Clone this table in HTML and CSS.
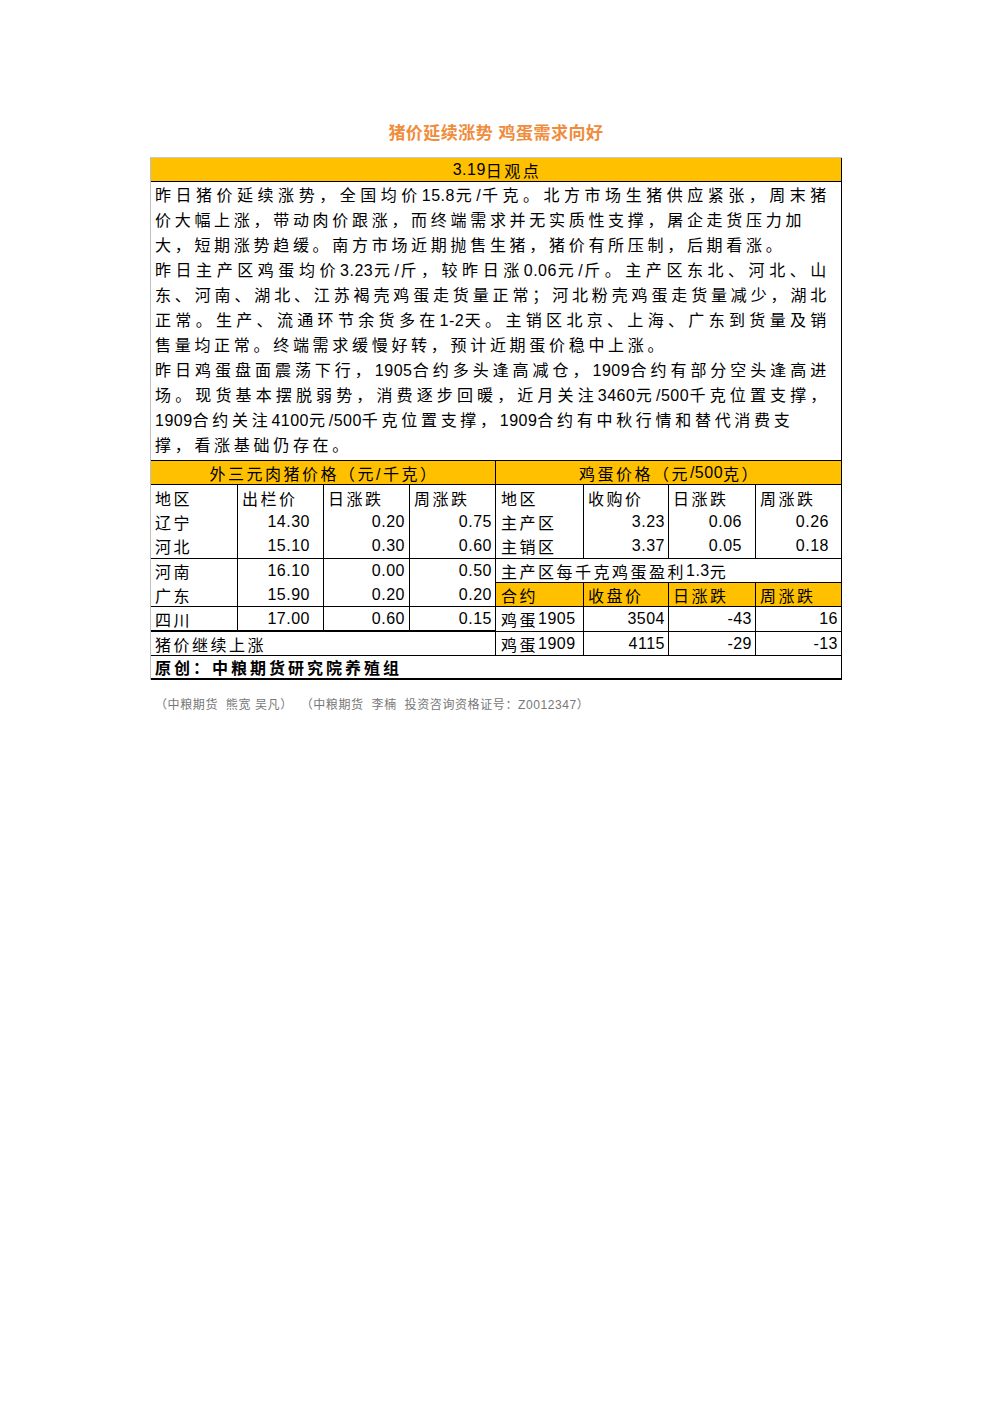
FILE: index.html
```html
<!DOCTYPE html>
<html lang="zh-CN">
<head>
<meta charset="utf-8">
<title>猪价延续涨势 鸡蛋需求向好</title>
<link rel="stylesheet" href="styles.css">
</head>
<body>
<main class="page">
  <h1 class="title">猪价延续涨势 鸡蛋需求向好</h1>
  <div class="sheet">
    <div class="c s8 bb hd"><span class="n">3.19</span>日观点</div>
    <div class="c s8 bb text">
      <div class="ln j">昨日猪价延续涨势，全国均价<span class="n">15.8</span>元<span class="n">/</span>千克。北方市场生猪供应紧张，周末猪</div>
      <div class="ln">价大幅上涨，带动肉价跟涨，而终端需求并无实质性支撑，屠企走货压力加</div>
      <div class="ln">大，短期涨势趋缓。南方市场近期抛售生猪，猪价有所压制，后期看涨。</div>
      <div class="ln j">昨日主产区鸡蛋均价<span class="n">3.23</span>元<span class="n">/</span>斤，较昨日涨<span class="n">0.06</span>元<span class="n">/</span>斤。主产区东北、河北、山</div>
      <div class="ln j">东、河南、湖北、江苏褐壳鸡蛋走货量正常；河北粉壳鸡蛋走货量减少，湖北</div>
      <div class="ln j">正常。生产、流通环节余货多在<span class="n">1-2</span>天。主销区北京、上海、广东到货量及销</div>
      <div class="ln">售量均正常。终端需求缓慢好转，预计近期蛋价稳中上涨。</div>
      <div class="ln j">昨日鸡蛋盘面震荡下行，<span class="n">1905</span>合约多头逢高减仓，<span class="n">1909</span>合约有部分空头逢高进</div>
      <div class="ln j">场。现货基本摆脱弱势，消费逐步回暖，近月关注<span class="n">3460</span>元<span class="n">/500</span>千克位置支撑，</div>
      <div class="ln"><span class="n">1909</span>合约关注<span class="n">4100</span>元<span class="n">/500</span>千克位置支撑，<span class="n">1909</span>合约有中秋行情和替代消费支</div>
      <div class="ln">撑，看涨基础仍存在。</div>
    </div>

    <div class="c s4 bb hd">外三元肉猪价格（元/千克）</div>
    <div class="c s4 bb hd">鸡蛋价格（元<span class="n">/500</span>克）</div>

    <div class="c">地区</div>
    <div class="c">出栏价</div>
    <div class="c">日涨跌</div>
    <div class="c">周涨跌</div>
    <div class="c r">地区</div>
    <div class="c">收购价</div>
    <div class="c">日涨跌</div>
    <div class="c">周涨跌</div>

    <div class="c">辽宁</div>
    <div class="c num pad">14.30</div>
    <div class="c num p4">0.20</div>
    <div class="c num">0.75</div>
    <div class="c r">主产区</div>
    <div class="c num">3.23</div>
    <div class="c num pad">0.06</div>
    <div class="c num pad12">0.26</div>

    <div class="c bb">河北</div>
    <div class="c bb num pad">15.10</div>
    <div class="c bb num p4">0.30</div>
    <div class="c bb num">0.60</div>
    <div class="c bb r">主销区</div>
    <div class="c bb num">3.37</div>
    <div class="c bb num pad">0.05</div>
    <div class="c bb num pad12">0.18</div>

    <div class="c">河南</div>
    <div class="c num pad">16.10</div>
    <div class="c num p4">0.00</div>
    <div class="c num">0.50</div>
    <div class="c s4 bb r">主产区每千克鸡蛋盈利<span class="n">1.3</span>元</div>

    <div class="c bb">广东</div>
    <div class="c bb num pad">15.90</div>
    <div class="c bb num p4">0.20</div>
    <div class="c bb num">0.20</div>
    <div class="c bb hl r">合约</div>
    <div class="c bb hl">收盘价</div>
    <div class="c bb hl">日涨跌</div>
    <div class="c bb hl">周涨跌</div>

    <div class="c bbt">四川</div>
    <div class="c bbt num pad">17.00</div>
    <div class="c bbt num p4">0.60</div>
    <div class="c bbt num">0.15</div>
    <div class="c bb r">鸡蛋<span class="n">1905</span></div>
    <div class="c bb num">3504</div>
    <div class="c bb num">-43</div>
    <div class="c bb num">16</div>

    <div class="c s4 bb">猪价继续上涨</div>
    <div class="c bb r">鸡蛋<span class="n">1909</span></div>
    <div class="c bb num">4115</div>
    <div class="c bb num">-29</div>
    <div class="c bb num">-13</div>

    <div class="c s8 bbt strong">原创：中粮期货研究院养殖组</div>
  </div>
  <p class="source">（中粮期货  熊宽 吴凡）  （中粮期货  李楠  投资咨询资格证号：Z0012347）</p>
</main>
</body>
</html>
```

FILE: styles.css
```css
* {
  box-sizing: border-box;
}

html, body {
  margin: 0;
  padding: 0;
  background: #ffffff;
}

body {
  font-family: "Liberation Sans", "Noto Sans CJK SC", sans-serif;
  color: #000000;
}

.page {
  padding-top: 122px;
  width: 992px;
}

.title {
  margin: 0 0 11px;
  text-align: center;
  font-size: 17px;
  line-height: 24px;
  height: 24px;
  font-weight: bold;
  color: #f08c3c;
  letter-spacing: 0.5px;
}

.sheet {
  display: grid;
  grid-template-columns: 87px 86px 86px 86px 88px 85px 87px 86px;
  grid-template-rows: 24px 279px 24px 25px 24px 25px 24px 24px 25px 24px 24px;
  margin-left: 150px;
  width: 692px;
  border-left: 1px solid #bfbfbf;
  border-top: 1px solid #c8c8c8;
}

.c {
  display: flex;
  align-items: center;
  min-width: 0;
  overflow: hidden;
  white-space: nowrap;
  padding: 0 2px 0 4px;
  border-right: 1px solid #000000;
  font-size: 16px;
  letter-spacing: 2.5px;
}

.c.r {
  padding-left: 5px;
}

.s8 {
  grid-column: span 8;
}

.s4 {
  grid-column: span 4;
}

.bb {
  border-bottom: 1px solid #000000;
}

.bbt {
  border-bottom: 2px solid #000000;
}

.hd {
  background: #ffc000;
  justify-content: center;
}

.hl {
  background: #ffc000;
}

.num {
  justify-content: flex-end;
  padding-right: 3px;
  letter-spacing: 0.5px;
}

.num.p4 {
  padding-right: 4px;
}

.num.pad {
  padding-right: 13px;
}

.num.pad12 {
  padding-right: 12px;
}

.strong {
  font-weight: bold;
  letter-spacing: 3px;
}

.text {
  display: block;
  padding: 1px 11px 0 4px;
  letter-spacing: 3.7px;
}

.ln {
  height: 25px;
  line-height: 25px;
  white-space: nowrap;
}

.ln.j {
  text-align: justify;
  text-align-last: justify;
}

.n {
  letter-spacing: 0.5px;
}

.source {
  margin: 17px 0 0 155px;
  font-size: 12px;
  line-height: 16px;
  color: #777777;
  letter-spacing: 0.6px;
  white-space: pre;
}
```
